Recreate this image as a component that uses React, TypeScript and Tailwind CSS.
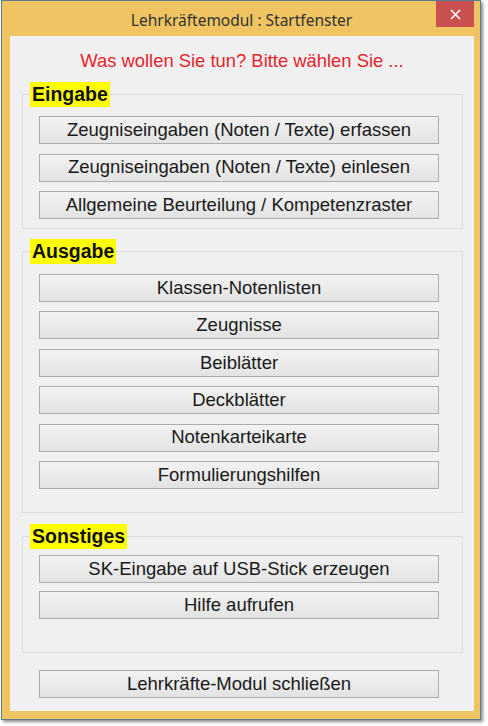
import type { ReactNode } from 'react';

const eingabe = [
  'Zeugniseingaben (Noten / Texte) erfassen',
  'Zeugniseingaben (Noten / Texte) einlesen',
  'Allgemeine Beurteilung / Kompetenzraster',
];

const ausgabe = [
  'Klassen-Notenlisten',
  'Zeugnisse',
  'Beiblätter',
  'Deckblätter',
  'Notenkarteikarte',
  'Formulierungshilfen',
];

const sonstiges = ['SK-Eingabe auf USB-Stick erzeugen', 'Hilfe aufrufen'];

function WinButton({ label }: { label: string }) {
  return (
    <button
      type="button"
      className="h-[28px] w-[400px] border border-[#adadad] bg-gradient-to-b from-[#f2f2f2] to-[#e3e3e3] text-[18.5px] leading-none text-[#1a1a1a]"
    >
      {label}
    </button>
  );
}

function Group({
  title,
  children,
  className,
}: {
  title: string;
  children: ReactNode;
  className: string;
}) {
  return (
    <fieldset className="ml-[12px] mr-[11px] border border-[#dcdcdc]">
      <legend className="ml-[7px] bg-[#ffff00] px-[2px] text-[19.5px] font-bold leading-[25px] text-[#111]">
        {title}
      </legend>
      <div className={`flex flex-col pl-[16px] ${className}`}>{children}</div>
    </fieldset>
  );
}

export default function App() {
  return (
    <div className="min-h-screen bg-white" style={{ fontFamily: '"Liberation Sans", Arial, sans-serif' }}>
      <div className="ml-[1px] flex h-[720px] w-[480px] flex-col border border-[#5b7b92] bg-[#f0c462] shadow-[2px_2px_3px_rgba(0,0,0,0.45)]">
        {/* title bar */}
        <div className="flex h-[35px] items-start pl-[45px] pr-[6px]">
          <div
            className="flex-1 pt-[9px] text-center text-[15.5px] leading-[20px] text-[#333]"
            style={{ fontFamily: '"Noto Sans", "Open Sans", sans-serif' }}
          >
            Lehrkräftemodul : Startfenster
          </div>
          <div className="flex h-[26px] w-[38px] items-center justify-center bg-[#c9504f]">
            <svg width="11" height="11" viewBox="0 0 11 11" stroke="white" strokeWidth="1.6">
              <path d="M1 1 L10 10 M10 1 L1 10" />
            </svg>
          </div>
        </div>

        {/* client area */}
        <div className="mb-[8px] ml-[8px] mr-[6px] flex flex-1 flex-col bg-[#f0f0f0]">
          <div className="pt-[14px] text-center text-[18.4px] leading-[22px] text-[#e8232b]">
            Was wollen Sie tun? Bitte wählen Sie ...
          </div>

          <div className="mt-[10px]">
            <Group title="Eingabe" className="gap-[9.5px] pt-[9px] pb-[9px]">
              {eingabe.map((l) => (
                <WinButton key={l} label={l} />
              ))}
            </Group>
          </div>

          <div className="mt-[10px]">
            <Group title="Ausgabe" className="gap-[9.4px] pt-[10px] pb-[23px]">
              {ausgabe.map((l) => (
                <WinButton key={l} label={l} />
              ))}
            </Group>
          </div>

          <div className="mt-[11px]">
            <Group title="Sonstiges" className="gap-[8px] pt-[6px] pb-[33px]">
              {sonstiges.map((l) => (
                <WinButton key={l} label={l} />
              ))}
            </Group>
          </div>

          <div className="mt-[17px] pl-[29px]">
            <WinButton label="Lehrkräfte-Modul schließen" />
          </div>
        </div>
      </div>
    </div>
  );
}
